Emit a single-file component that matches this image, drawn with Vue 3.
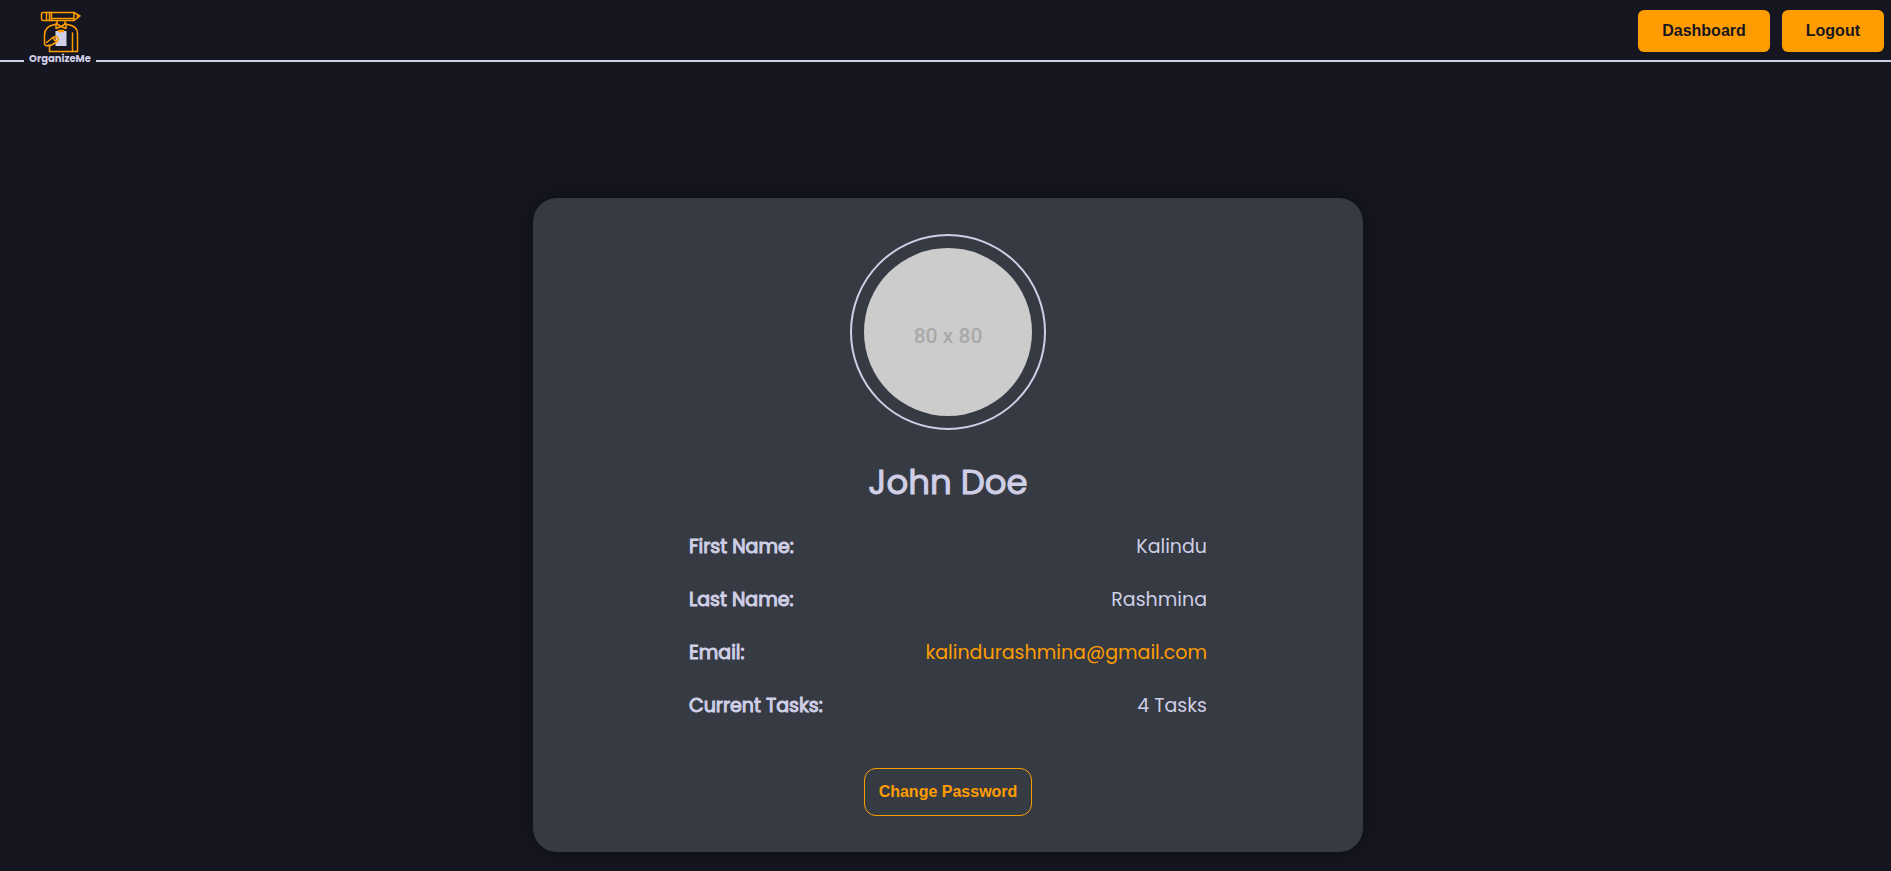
<script setup>
const details = [
  { label: 'First Name:', value: 'Kalindu' },
  { label: 'Last Name:', value: 'Rashmina' },
  { label: 'Email:', value: 'kalindurashmina@gmail.com', href: 'mailto:kalindurashmina@gmail.com' },
  { label: 'Current Tasks:', value: '4 Tasks' },
]
</script>

<template>
  <div class="page">
    <header class="navbar">
      <a class="logo" href="#" aria-label="OrganizeMe home">
        <svg class="logo-mark" viewBox="0 0 42 42" width="42" height="42" fill="none" stroke="#ff9d00" stroke-width="1.5" stroke-linejoin="round" stroke-linecap="round" aria-hidden="true">
          <path d="M4 1.500H35L41 5L35 9.500H4Q2.500 9.500 2.500 8V3Q2.500 1.500 4 1.500Z" />
          <path d="M7.500 1.500V9.500M10.500 1.500V9.500M12.500 1.500V9.500M12.500 7.500H34M35 1.500V9.500M38.500 4V7" />
          <path d="M18 10V13M26 10V13" />
          <path d="M22 15.500L17 12.500V17.500L22 15.500L27 12.500V17.500Z" />
          <path d="M16 13.500Q5.500 15 5.500 24V33Q6.500 36 10.500 34V40.500H38.500V23Q38.500 14.500 28 13.500" />
          <path d="M33.500 22V40.500" />
          <path d="M16.500 20H27.500V35H16.500Z" fill="#cfcfe7" stroke="none" />
          <path d="M19.500 20.500V19.500H24.500V20.500Z" fill="#161621" />
          <path d="M7.500 31.500L14.500 26L18 25.500L19.500 28.500L17 31.500L10.500 35M14.500 26L15.500 29.500H19" />
        </svg>
        <span class="logo-name">OrganizeMe</span>
      </a>
      <nav class="nav-actions">
        <button class="nav-button" type="button">Dashboard</button>
        <button class="nav-button" type="button">Logout</button>
      </nav>
    </header>

    <main class="content">
      <section class="card">
        <div class="avatar-ring">
          <div class="avatar">80 x 80</div>
        </div>
        <h1 class="name">John Doe</h1>
        <dl class="details">
          <div v-for="item in details" :key="item.label" class="row">
            <dt>{{ item.label }}</dt>
            <dd>
              <a v-if="item.href" :href="item.href">{{ item.value }}</a>
              <template v-else>{{ item.value }}</template>
            </dd>
          </div>
        </dl>
        <button class="outline-button" type="button">Change Password</button>
      </section>
    </main>
  </div>
</template>

<style>
body {
  margin: 0;
  background: #161621;
}
</style>

<style scoped>
.page {
  min-height: 100vh;
  box-sizing: border-box;
  color: #cfcfe7;
  font-family: Poppins, Inter, sans-serif;
}

.navbar {
  display: flex;
  align-items: center;
  justify-content: space-between;
  height: 60px;
  padding: 0 7px 0 24px;
  border-bottom: 2px solid #cfcfe7;
}

.logo {
  display: flex;
  flex-direction: column;
  align-items: center;
  align-self: flex-start;
  width: 72px;
  height: 56px;
  padding-top: 11px;
  background: #161621;
  color: #cfcfe7;
  text-decoration: none;
}

.logo-mark {
  flex: none;
}

.logo-name {
  font-size: 10px;
  font-weight: 700;
  line-height: 12px;
}

.nav-actions {
  display: flex;
  gap: 12px;
}

.nav-button {
  height: 42px;
  margin-top: 2px;
  padding: 0 24px;
  border: 0;
  border-radius: 6px;
  background: #ff9d00;
  color: #161621;
  font: bold 16px "Liberation Sans", Arial, sans-serif;
  cursor: pointer;
}

.content {
  display: flex;
  justify-content: center;
  padding: 136px 0 19px 5px;
}

.card {
  display: flex;
  flex-direction: column;
  align-items: center;
  box-sizing: border-box;
  width: 92%;
  max-width: 830px;
  padding: 36px;
  border-radius: 24px;
  background: #363a42;
  box-shadow: 0 0 24px rgba(0, 0, 0, 0.4);
}

.avatar-ring {
  padding: 12px;
  border: 2px solid #cfcfe7;
  border-radius: 50%;
}

.avatar {
  display: flex;
  align-items: center;
  justify-content: center;
  box-sizing: border-box;
  width: 168px;
  height: 168px;
  padding-top: 7px;
  border-radius: 50%;
  background: #cccccc;
  color: #a9a9a9;
  font: 500 21px Roboto, sans-serif;
}

.name {
  margin: 25px 0 23px;
  font-size: 34px;
  font-weight: 400;
  line-height: 54px;
  -webkit-text-stroke: 1px currentColor;
}

.details {
  display: flex;
  flex-direction: column;
  gap: 23px;
  width: 100%;
  max-width: 518px;
  margin: 0 0 47px;
  font-size: 19px;
  line-height: 30px;
}

.row {
  display: flex;
  justify-content: space-between;
  gap: 16px;
}

.row dt {
  -webkit-text-stroke: 1px currentColor;
}

.row dd {
  margin: 0;
}

.row a {
  color: #ff9d00;
  text-decoration: none;
}

.outline-button {
  height: 48px;
  padding: 0 14px;
  border: 1px solid #ff9d00;
  border-radius: 12px;
  background: transparent;
  color: #ff9d00;
  font: bold 16px "Liberation Sans", Arial, sans-serif;
  cursor: pointer;
}
</style>
